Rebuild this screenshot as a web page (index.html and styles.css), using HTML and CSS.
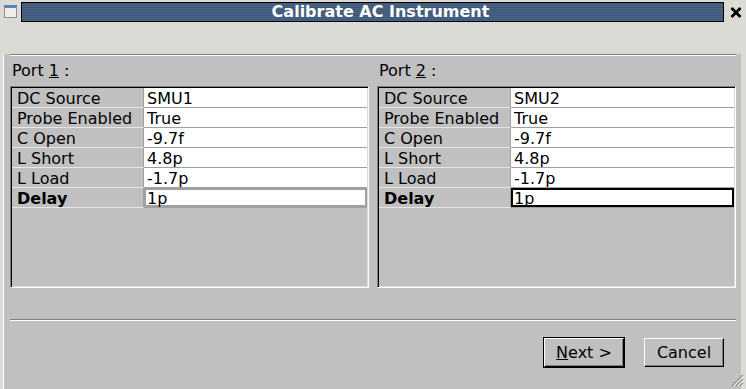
FILE: index.html
```html
<!DOCTYPE html>
<html lang="en">
<head>
    <meta charset="UTF-8">
    <title>Calibrate AC Instrument</title>
    <link rel="stylesheet" href="styles.css">
</head>
<body>
    <div class="window">
        <div class="titlebar">
            <div class="icon-slot"><div class="win-icon"></div></div>
            <div class="title">Calibrate AC Instrument</div>
            <div class="close-slot">
                <svg width="12" height="11" viewBox="0 0 12 11">
                    <path d="M1.5 1 L10.5 10 M10.5 1 L1.5 10" stroke="#000" stroke-width="2.8" fill="none"/>
                </svg>
            </div>
        </div>

        <div class="client">
            <div class="sep"></div>

            <div class="ports">
                <div class="port">
                    <div class="port-label">Port <u>1</u> :</div>
                    <div class="grid-panel">
                        <div class="row"><div class="key">DC Source</div><div class="val">SMU1</div></div>
                        <div class="row"><div class="key">Probe Enabled</div><div class="val">True</div></div>
                        <div class="row"><div class="key">C Open</div><div class="val">-9.7f</div></div>
                        <div class="row"><div class="key">L Short</div><div class="val">4.8p</div></div>
                        <div class="row"><div class="key">L Load</div><div class="val">-1.7p</div></div>
                        <div class="row"><div class="key bold">Delay</div><div class="val editing">1p</div></div>
                    </div>
                </div>
                <div class="port">
                    <div class="port-label">Port <u>2</u> :</div>
                    <div class="grid-panel">
                        <div class="row"><div class="key">DC Source</div><div class="val">SMU2</div></div>
                        <div class="row"><div class="key">Probe Enabled</div><div class="val">True</div></div>
                        <div class="row"><div class="key">C Open</div><div class="val">-9.7f</div></div>
                        <div class="row"><div class="key">L Short</div><div class="val">4.8p</div></div>
                        <div class="row"><div class="key">L Load</div><div class="val">-1.7p</div></div>
                        <div class="row"><div class="key bold">Delay</div><div class="val editing focused">1p</div></div>
                    </div>
                </div>
            </div>

            <div class="sep sep-bottom"></div>

            <div class="buttons">
                <button class="btn btn-default"><span class="btn-face"><u>N</u>ext &gt;</span></button>
                <button class="btn"><span class="btn-face">Cancel</span></button>
            </div>
        </div>

        <svg class="grip" width="15" height="15" viewBox="0 0 15 15">
            <path d="M14 3 L3 14 M14 7 L7 14 M14 11 L11 14" stroke="#8a8a8a" stroke-width="1.2"/>
            <path d="M14 4.5 L4.5 14 M14 8.5 L8.5 14 M14 12.5 L12.5 14" stroke="#fff" stroke-width="1"/>
        </svg>
    </div>
</body>
</html>
```

FILE: styles.css
```css
* {
    margin: 0;
    padding: 0;
    box-sizing: border-box;
}

html, body {
    height: 389px;
    overflow: hidden;
}

body {
    background: #dcdad5;
    font-family: 'DejaVu Sans', sans-serif;
    font-size: 16px;
    color: #000;
}

.window {
    position: relative;
    width: 746px;
    height: 389px;
    overflow: hidden;
    background: #dcdad5;
}

/* Title bar */
.titlebar {
    display: flex;
    height: 23px;
}

.icon-slot {
    width: 21px;
    padding: 5px 0 0 4px;
}

.win-icon {
    width: 13px;
    height: 13px;
    border: 1px solid #8e8e8e;
    border-top: 3px solid #5a82b8;
    background: #eeeeea;
}

.title {
    flex: 1;
    margin-top: 2px;
    height: 20px;
    border: 1px solid #000;
    background: repeating-linear-gradient(to bottom, #3e5776 0 1px, #4a6585 1px 2px);
    color: #fff;
    font-weight: bold;
    line-height: 18px;
    text-align: center;
    padding-left: 16px;
}

.close-slot {
    width: 22px;
    padding: 7px 0 0 6px;
}

.close-slot svg {
    display: block;
}

/* Client area */
.client {
    margin: 0 5px 0 4px;
    height: 361px;
    padding: 0 5px 0 6px;
    background: #c0c0c0;
    box-shadow: -1px 0 0 #fff, 0 1px 0 #fff;
}

.sep {
    margin-top: 31px;
    height: 2px;
    border-top: 1px solid #808080;
    border-bottom: 1px solid #fff;
}

.ports {
    display: flex;
    gap: 8px;
}

.port {
    flex: 1;
}

.port-label {
    margin-top: 5px;
    padding-left: 2px;
    line-height: 19px;
}

.grid-panel {
    margin-top: 6px;
    height: 202px;
    border: 1px solid;
    border-color: #808080 #fff #fff #808080;
    box-shadow: inset 1px 1px 0 #000, inset -1px -1px 0 #dcdcdc;
    padding: 1px;
    background: #c0c0c0;
}

.row {
    display: flex;
    height: 20px;
}

.key {
    width: 132px;
    padding: 2px 0 0 5px;
    line-height: 17px;
    border-right: 1px solid #a0a0a0;
    border-bottom: 1px solid #e6e6e6;
    white-space: nowrap;
}

.key.bold {
    font-weight: bold;
}

.val {
    flex: 1;
    padding: 2px 0 0 3px;
    line-height: 17px;
    background: #fff;
    border-bottom: 1px solid #a0a0a0;
}

.val.editing {
    box-shadow: inset 0 0 0 2px #a0a0a0;
}

.val.focused {
    box-shadow: inset 0 0 0 2px #000;
}

/* Buttons */
.buttons {
    display: flex;
    justify-content: flex-end;
    align-items: center;
    gap: 19px;
    margin-top: 16px;
    padding-right: 12px;
}

.btn {
    width: 80px;
    height: 29px;
    border: none;
    background: #c0c0c0;
    font-family: 'DejaVu Sans', sans-serif;
    font-size: 16px;
    color: #000;
    display: flex;
}

.btn-face {
    flex: 1;
    display: flex;
    align-items: center;
    justify-content: center;
    border: 1px solid;
    border-color: #fff #000 #000 #fff;
    box-shadow: inset -1px -1px 0 #808080;
}

.btn-default {
    width: 82px;
    height: 31px;
    border: 1px solid #000;
}

.grip {
    position: absolute;
    right: 2px;
    bottom: 2px;
}
```
